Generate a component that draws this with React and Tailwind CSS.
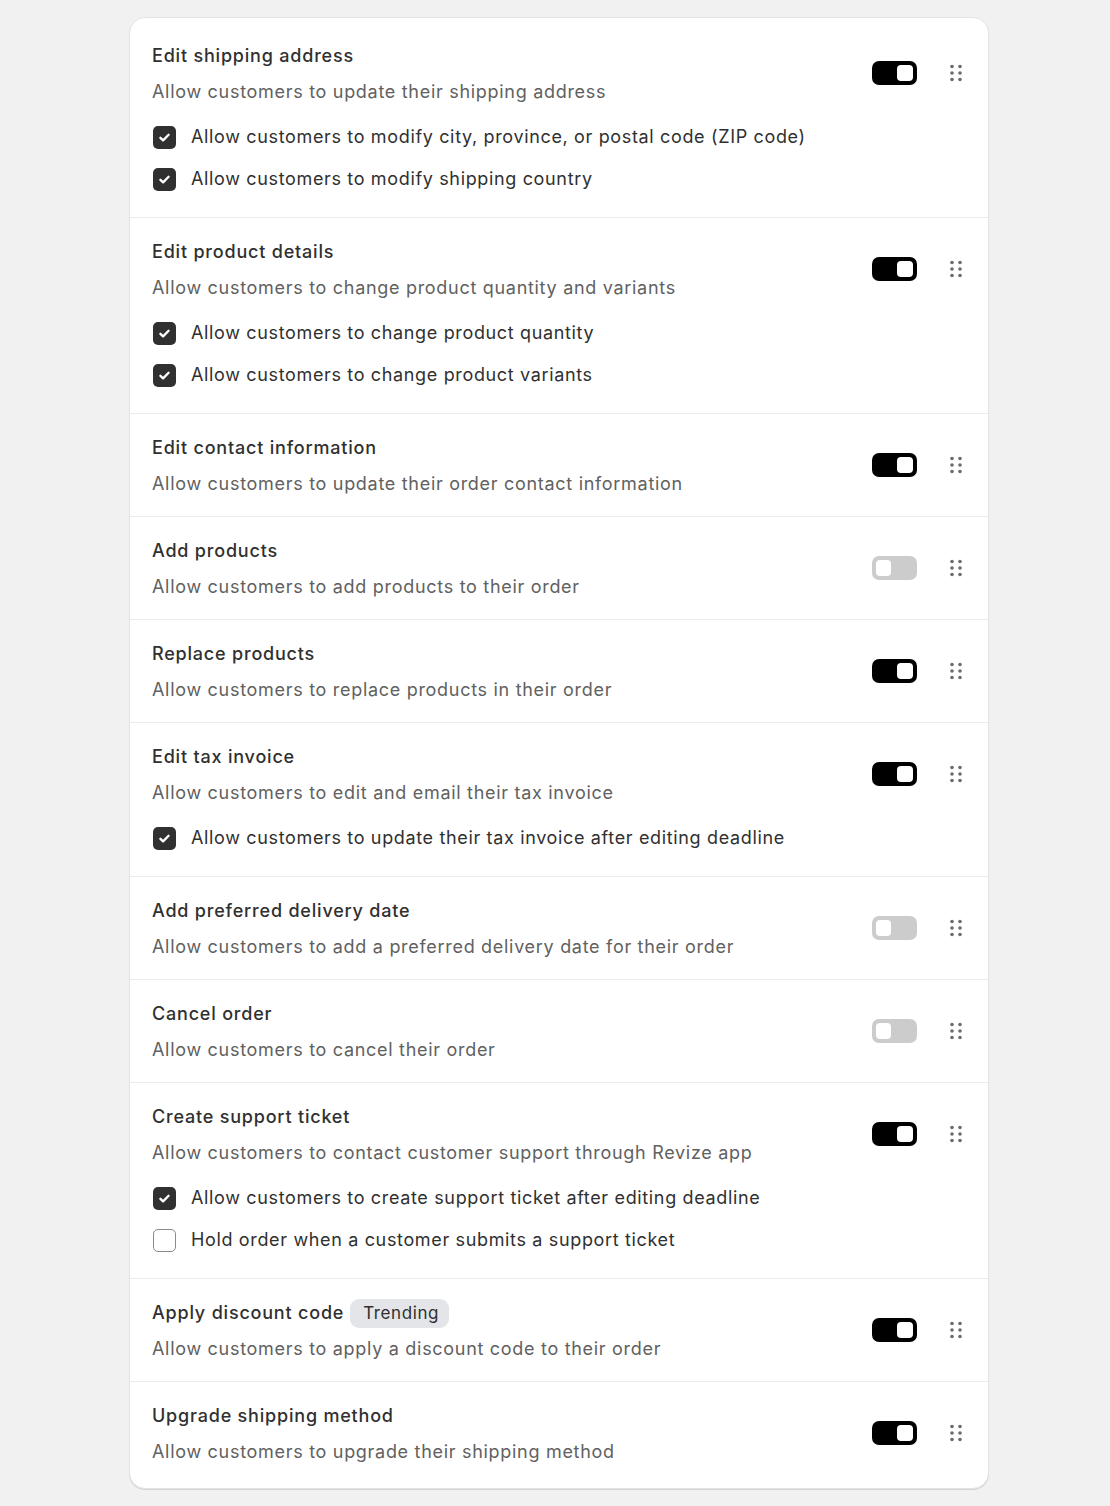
import React from "react";

const rows = [
  {
    title: "Edit shipping address",
    desc: "Allow customers to update their shipping address",
    on: true,
    checks: [
      { label: "Allow customers to modify city, province, or postal code (ZIP code)", checked: true },
      { label: "Allow customers to modify shipping country", checked: true },
    ],
  },
  {
    title: "Edit product details",
    desc: "Allow customers to change product quantity and variants",
    on: true,
    checks: [
      { label: "Allow customers to change product quantity", checked: true },
      { label: "Allow customers to change product variants", checked: true },
    ],
  },
  { title: "Edit contact information", desc: "Allow customers to update their order contact information", on: true },
  { title: "Add products", desc: "Allow customers to add products to their order", on: false },
  { title: "Replace products", desc: "Allow customers to replace products in their order", on: true },
  {
    title: "Edit tax invoice",
    desc: "Allow customers to edit and email their tax invoice",
    on: true,
    checks: [{ label: "Allow customers to update their tax invoice after editing deadline", checked: true }],
  },
  { title: "Add preferred delivery date", desc: "Allow customers to add a preferred delivery date for their order", on: false },
  { title: "Cancel order", desc: "Allow customers to cancel their order", on: false },
  {
    title: "Create support ticket",
    desc: "Allow customers to contact customer support through Revize app",
    on: true,
    checks: [
      { label: "Allow customers to create support ticket after editing deadline", checked: true },
      { label: "Hold order when a customer submits a support ticket", checked: false },
    ],
  },
  { title: "Apply discount code", badge: "Trending", desc: "Allow customers to apply a discount code to their order", on: true },
  { title: "Upgrade shipping method", desc: "Allow customers to upgrade their shipping method", on: true },
];

function Toggle({ on }) {
  return on ? (
    <div className="flex h-6 w-[45px] items-center justify-end rounded-[7px] bg-black pr-[4px]">
      <div className="h-4 w-4 rounded-[4px] bg-white" />
    </div>
  ) : (
    <div className="flex h-6 w-[45px] items-center justify-start rounded-[7px] bg-[#cccccc] pl-[4px]">
      <div className="h-[16px] w-[15px] rounded-[4px] bg-white" />
    </div>
  );
}

function DragHandle() {
  return (
    <div className="flex h-5 w-5 items-center justify-center">
      <svg width="12" height="18" viewBox="0 0 12 18" fill="#6b6b6b">
        <circle cx="2" cy="2.5" r="1.8" />
        <circle cx="10" cy="2.5" r="1.8" />
        <circle cx="2" cy="9" r="1.8" />
        <circle cx="10" cy="9" r="1.8" />
        <circle cx="2" cy="15.5" r="1.8" />
        <circle cx="10" cy="15.5" r="1.8" />
      </svg>
    </div>
  );
}

function Checkbox({ checked }) {
  return checked ? (
    <div className="ml-px flex h-[23px] w-[23px] shrink-0 items-center justify-center rounded-[5px] bg-[#303030]">
      <svg width="23" height="23" viewBox="0 0 23 23" fill="none">
        <path d="M7.4 11.8L10.1 14.4L15.6 8.8" stroke="white" strokeWidth="2.3" strokeLinecap="round" strokeLinejoin="round" />
      </svg>
    </div>
  ) : (
    <div className="ml-px h-[23px] w-[23px] shrink-0 rounded-[5px] border-[1.5px] border-[#8a8a8a] bg-white" />
  );
}

function Row({ row, first }) {
  return (
    <div className={`flex flex-col pt-[22px] pb-[20px] pl-[22px] pr-[22px] ${first ? "" : "border-t border-[#ebebeb]"}`}>
      <div className="flex items-center justify-between">
        <div className="flex flex-col gap-3">
          <div className="flex h-6 items-center gap-[6px]">
            <span className="text-[18px] font-medium leading-6 tracking-[0.8px] text-[#303030]">{row.title}</span>
            {row.badge && (
              <span className="flex h-[29px] items-center rounded-[9px] bg-[#e3e5e9] pl-[13px] pr-[10px] text-[17px] leading-6 tracking-[0.6px] text-[#303030]">
                {row.badge}
              </span>
            )}
          </div>
          <div className="text-[18px] leading-6 tracking-[0.7px] text-[#616161]">{row.desc}</div>
        </div>
        <div className="mb-[2px] flex items-center gap-[29px]">
          <Toggle on={row.on} />
          <DragHandle />
        </div>
      </div>
      {row.checks && (
        <div className="mt-[21px] flex flex-col gap-[18px] pb-[6px]">
          {row.checks.map((c, i) => (
            <div key={i} className="flex h-6 items-center gap-[15px]">
              <Checkbox checked={c.checked} />
              <span className="text-[18px] leading-6 tracking-[0.65px] text-[#303030]">{c.label}</span>
            </div>
          ))}
        </div>
      )}
    </div>
  );
}

export default function App() {
  return (
    <div
      className="min-h-screen bg-[#f1f1f1] pl-[129px] pt-[17px] pb-[17px]"
      style={{ fontFamily: "Inter, 'Noto Sans', sans-serif" }}
    >
      <div className="w-[860px] overflow-hidden rounded-2xl border border-[#e3e3e3] bg-white py-1 shadow-[0_1px_0_0_#d4d4d4]">
        {rows.map((r, i) => (
          <Row key={i} row={r} first={i === 0} />
        ))}
      </div>
    </div>
  );
}
